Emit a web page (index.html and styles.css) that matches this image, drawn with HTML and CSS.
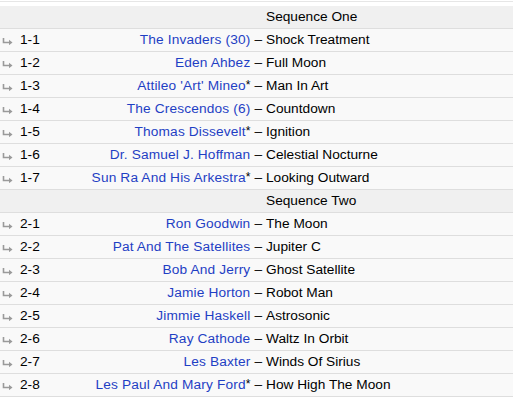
FILE: index.html
```html
<!DOCTYPE html>
<html>
<head>
<meta charset="utf-8">
<link rel="stylesheet" href="styles.css">
</head>
<body>
<div class="tracklist">
  <div class="topline"></div>
  <div class="row heading"><span class="title">Sequence One</span></div>
  <div class="row"><span class="arrow"><svg width="11" height="7" viewBox="0 0 11 7"><path d="M1.5 0V4.5H8" fill="none" stroke="#9a9a9a" stroke-width="1.6"/><path d="M7 1.8L10.5 4.5L7 7.2Z" fill="#9a9a9a"/></svg></span><span class="pos">1-1</span><span class="artist"><a>The Invaders (30)</a> –</span><span class="title">Shock Treatment</span></div>
  <div class="row"><span class="arrow"><svg width="11" height="7" viewBox="0 0 11 7"><path d="M1.5 0V4.5H8" fill="none" stroke="#9a9a9a" stroke-width="1.6"/><path d="M7 1.8L10.5 4.5L7 7.2Z" fill="#9a9a9a"/></svg></span><span class="pos">1-2</span><span class="artist"><a>Eden Ahbez</a> –</span><span class="title">Full Moon</span></div>
  <div class="row"><span class="arrow"><svg width="11" height="7" viewBox="0 0 11 7"><path d="M1.5 0V4.5H8" fill="none" stroke="#9a9a9a" stroke-width="1.6"/><path d="M7 1.8L10.5 4.5L7 7.2Z" fill="#9a9a9a"/></svg></span><span class="pos">1-3</span><span class="artist"><a>Attileo 'Art' Mineo</a><span class="star">*</span> –</span><span class="title">Man In Art</span></div>
  <div class="row"><span class="arrow"><svg width="11" height="7" viewBox="0 0 11 7"><path d="M1.5 0V4.5H8" fill="none" stroke="#9a9a9a" stroke-width="1.6"/><path d="M7 1.8L10.5 4.5L7 7.2Z" fill="#9a9a9a"/></svg></span><span class="pos">1-4</span><span class="artist"><a>The Crescendos (6)</a> –</span><span class="title">Countdown</span></div>
  <div class="row"><span class="arrow"><svg width="11" height="7" viewBox="0 0 11 7"><path d="M1.5 0V4.5H8" fill="none" stroke="#9a9a9a" stroke-width="1.6"/><path d="M7 1.8L10.5 4.5L7 7.2Z" fill="#9a9a9a"/></svg></span><span class="pos">1-5</span><span class="artist"><a>Thomas Dissevelt</a><span class="star">*</span> –</span><span class="title">Ignition</span></div>
  <div class="row"><span class="arrow"><svg width="11" height="7" viewBox="0 0 11 7"><path d="M1.5 0V4.5H8" fill="none" stroke="#9a9a9a" stroke-width="1.6"/><path d="M7 1.8L10.5 4.5L7 7.2Z" fill="#9a9a9a"/></svg></span><span class="pos">1-6</span><span class="artist"><a>Dr. Samuel J. Hoffman</a> –</span><span class="title">Celestial Nocturne</span></div>
  <div class="row"><span class="arrow"><svg width="11" height="7" viewBox="0 0 11 7"><path d="M1.5 0V4.5H8" fill="none" stroke="#9a9a9a" stroke-width="1.6"/><path d="M7 1.8L10.5 4.5L7 7.2Z" fill="#9a9a9a"/></svg></span><span class="pos">1-7</span><span class="artist"><a>Sun Ra And His Arkestra</a><span class="star">*</span> –</span><span class="title">Looking Outward</span></div>
  <div class="row heading"><span class="title">Sequence Two</span></div>
  <div class="row"><span class="arrow"><svg width="11" height="7" viewBox="0 0 11 7"><path d="M1.5 0V4.5H8" fill="none" stroke="#9a9a9a" stroke-width="1.6"/><path d="M7 1.8L10.5 4.5L7 7.2Z" fill="#9a9a9a"/></svg></span><span class="pos">2-1</span><span class="artist"><a>Ron Goodwin</a> –</span><span class="title">The Moon</span></div>
  <div class="row"><span class="arrow"><svg width="11" height="7" viewBox="0 0 11 7"><path d="M1.5 0V4.5H8" fill="none" stroke="#9a9a9a" stroke-width="1.6"/><path d="M7 1.8L10.5 4.5L7 7.2Z" fill="#9a9a9a"/></svg></span><span class="pos">2-2</span><span class="artist"><a>Pat And The Satellites</a> –</span><span class="title">Jupiter C</span></div>
  <div class="row"><span class="arrow"><svg width="11" height="7" viewBox="0 0 11 7"><path d="M1.5 0V4.5H8" fill="none" stroke="#9a9a9a" stroke-width="1.6"/><path d="M7 1.8L10.5 4.5L7 7.2Z" fill="#9a9a9a"/></svg></span><span class="pos">2-3</span><span class="artist"><a>Bob And Jerry</a> –</span><span class="title">Ghost Satellite</span></div>
  <div class="row"><span class="arrow"><svg width="11" height="7" viewBox="0 0 11 7"><path d="M1.5 0V4.5H8" fill="none" stroke="#9a9a9a" stroke-width="1.6"/><path d="M7 1.8L10.5 4.5L7 7.2Z" fill="#9a9a9a"/></svg></span><span class="pos">2-4</span><span class="artist"><a>Jamie Horton</a> –</span><span class="title">Robot Man</span></div>
  <div class="row"><span class="arrow"><svg width="11" height="7" viewBox="0 0 11 7"><path d="M1.5 0V4.5H8" fill="none" stroke="#9a9a9a" stroke-width="1.6"/><path d="M7 1.8L10.5 4.5L7 7.2Z" fill="#9a9a9a"/></svg></span><span class="pos">2-5</span><span class="artist"><a>Jimmie Haskell</a> –</span><span class="title">Astrosonic</span></div>
  <div class="row"><span class="arrow"><svg width="11" height="7" viewBox="0 0 11 7"><path d="M1.5 0V4.5H8" fill="none" stroke="#9a9a9a" stroke-width="1.6"/><path d="M7 1.8L10.5 4.5L7 7.2Z" fill="#9a9a9a"/></svg></span><span class="pos">2-6</span><span class="artist"><a>Ray Cathode</a> –</span><span class="title">Waltz In Orbit</span></div>
  <div class="row"><span class="arrow"><svg width="11" height="7" viewBox="0 0 11 7"><path d="M1.5 0V4.5H8" fill="none" stroke="#9a9a9a" stroke-width="1.6"/><path d="M7 1.8L10.5 4.5L7 7.2Z" fill="#9a9a9a"/></svg></span><span class="pos">2-7</span><span class="artist"><a>Les Baxter</a> –</span><span class="title">Winds Of Sirius</span></div>
  <div class="row"><span class="arrow"><svg width="11" height="7" viewBox="0 0 11 7"><path d="M1.5 0V4.5H8" fill="none" stroke="#9a9a9a" stroke-width="1.6"/><path d="M7 1.8L10.5 4.5L7 7.2Z" fill="#9a9a9a"/></svg></span><span class="pos">2-8</span><span class="artist"><a>Les Paul And Mary Ford</a><span class="star">*</span> –</span><span class="title">How High The Moon</span></div>
</div>
</body>
</html>
```

FILE: styles.css
```css
html, body {
  margin: 0;
  padding: 0;
  background: #ffffff;
}
body {
  font-family: "Liberation Sans", Arial, Helvetica, sans-serif;
  font-size: 13.7px;
  color: #000;
}
.tracklist {
  width: 513px;
}
.topline {
  margin-top: 1px;
  border-top: 1px solid #e6e6e6;
  height: 4px;
}
.row {
  display: grid;
  grid-template-columns: 20px 60px 182px 1fr;
  height: 22px;
  line-height: 22px;
  border-bottom: 1px solid #dedede;
  background: #f9f9f9;
  white-space: nowrap;
}
.row.heading {
  background: #f0f0f0;
}
.heading .title {
  grid-column: 4;
}
.arrow {
  display: flex;
  align-items: center;
  padding-left: 2px;
  padding-top: 2px;
}
.pos {
  color: #000;
}
.artist {
  display: flex;
  justify-content: flex-end;
}
.artist a {
  color: #1f3fc4;
  text-decoration: none;
  margin-right: 4px;
  letter-spacing: 0.15px;
}
.artist .star {
  font-size: 12px;
  position: relative;
  top: -1px;
  margin-left: -4px;
  margin-right: 4px;
}
.title {
  padding-left: 4px;
}
```
